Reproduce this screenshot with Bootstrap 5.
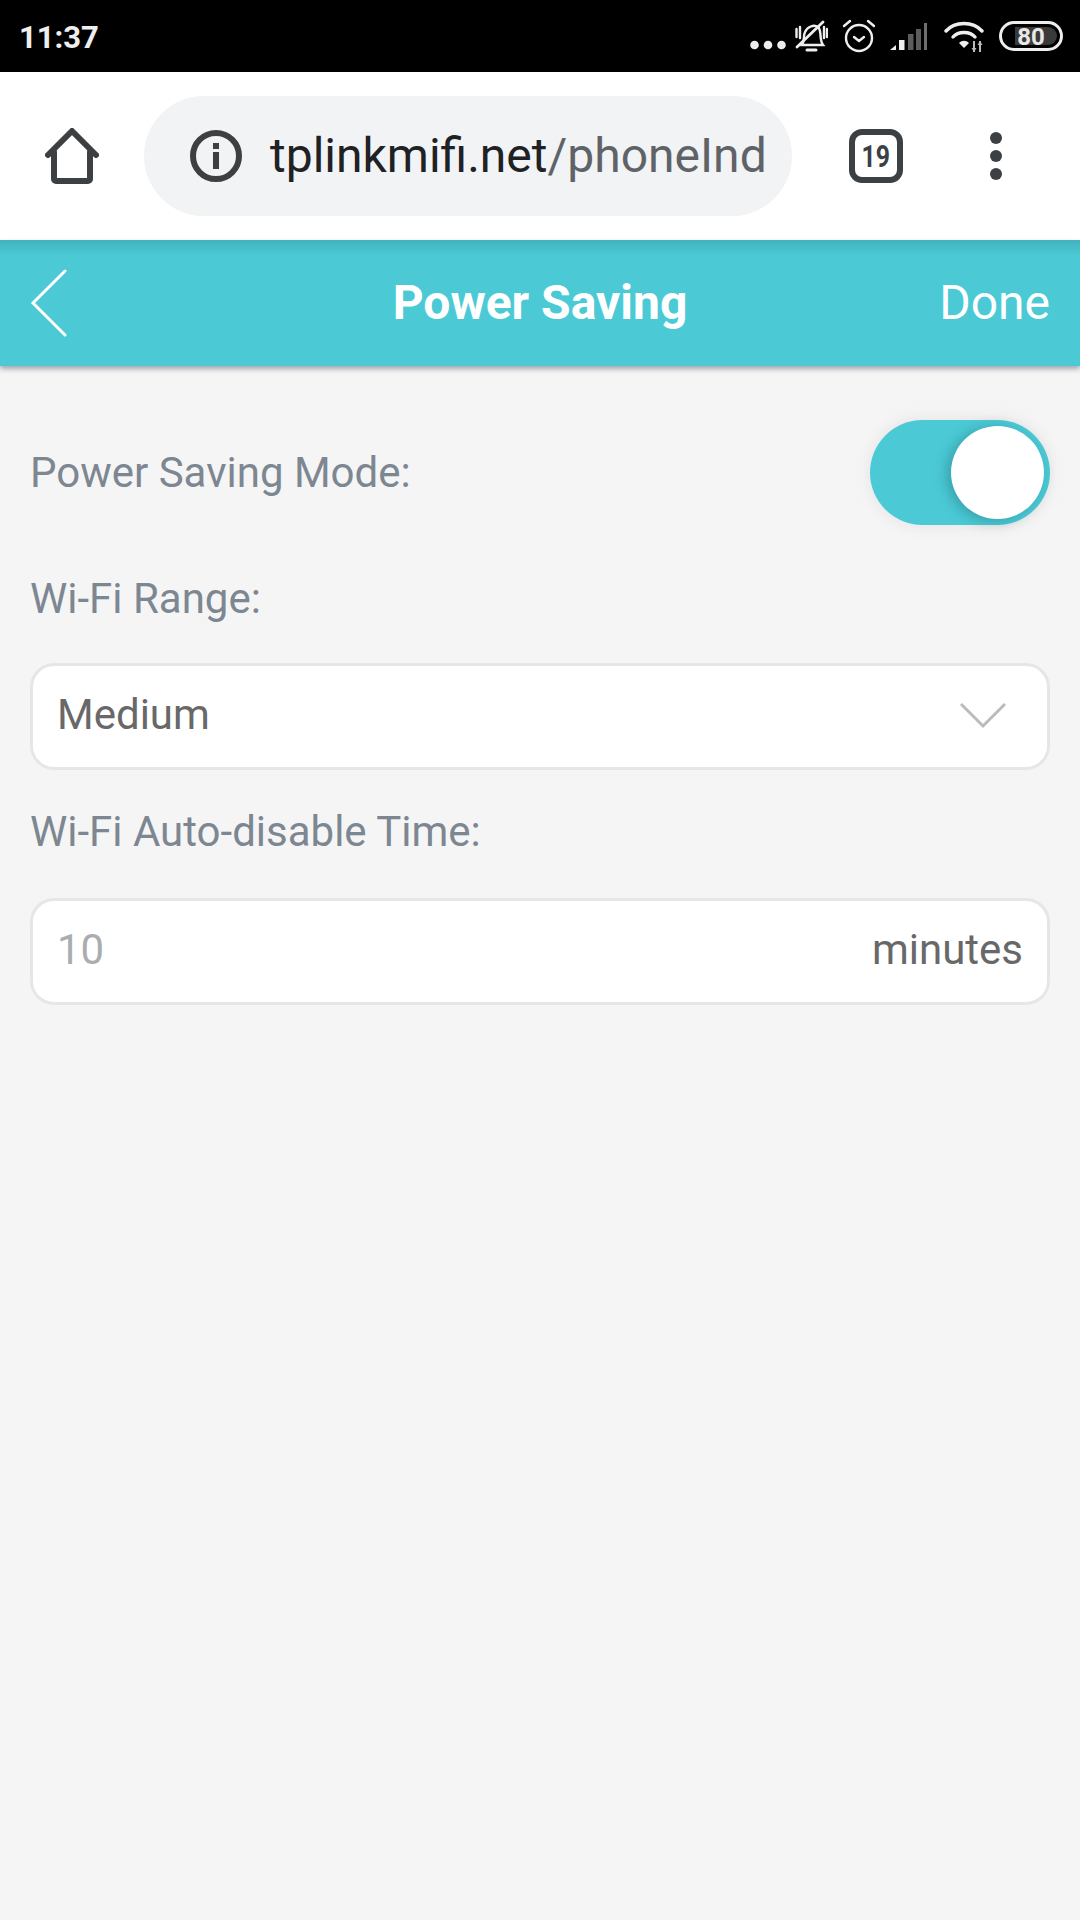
<!DOCTYPE html>
<html lang="en">
<head>
  <meta charset="UTF-8">
  <title>Power Saving</title>
  <link href="https://cdn.jsdelivr.net/npm/bootstrap@5.3.0/dist/css/bootstrap.min.css" rel="stylesheet">
  <style>
    html, body { height: 100%; }
    body { font-family: Roboto, "Liberation Sans", sans-serif; background: #f5f5f5; width: 1080px; min-height: 1920px; }
    svg { display: block; flex: none; }

    .status-strip { height: 72px; background: #000; color: #eee; padding: 0 17px 0 19px; }
    .status-time { font-size: 31px; font-weight: 700; line-height: 1; margin-top: 2px; }
    .status-dots { margin-top: 18px; }
    .status-bell { margin-left: 9px; }
    .status-alarm, .status-signal { margin-left: 14px; }
    .status-wifi { margin-left: 17px; }
    .status-battery { margin-left: 15px; }

    .browser-strip { height: 168px; background: #fff; padding-left: 45px; }
    .url-pill { width: 648px; height: 120px; margin-left: 45px; background: #f1f3f4; border-radius: 60px; padding: 0 0 0 46px; }
    .url-text { font-size: 48px; line-height: 1; color: #5f6368; white-space: nowrap; margin-left: 28px; }
    .url-text b { font-weight: 400; color: #202124; }
    .tab-count { width: 54px; height: 54px; margin-left: 57px; border: 6px solid #3c4043; border-radius: 13px; color: #3c4043; font-size: 31px; font-weight: 700; line-height: 1; }
    .tab-digits { display: block; transform: scaleX(.8); }
    .menu-dots { margin-left: 87px; }

    .title-bar { height: 126px; background: #4bcad6; color: #fff; padding: 0 30px; position: relative; box-shadow: 0 3px 5px rgba(60, 70, 90, .45); }
    .title-bar::before { content: ""; position: absolute; left: 0; right: 0; top: 0; height: 16px; background: linear-gradient(rgba(0, 0, 0, .12), rgba(0, 0, 0, 0)); }
    .title-side { flex: 1 1 0; }
    .title-text { font-size: 48px; font-weight: 700; line-height: 1; }
    .done-text { font-size: 48px; line-height: 1; }

    .settings-body { padding: 54px 30px 0; }
    .field-label { font-size: 42px; line-height: 1; color: #7d8792; }
    .label-range { margin: 53px 0 43px; }
    .label-time { margin: 41px 0 45px; }
    .switch-track { width: 180px; height: 105px; background: #4bcad6; border-radius: 53px; padding: 6px; box-shadow: 0 0 18px rgba(0, 0, 0, .08); }
    .switch-knob { width: 93px; height: 93px; background: #fff; border-radius: 50%; box-shadow: -4px 2px 14px rgba(0, 60, 70, .3); }
    .field-box.form-control { height: 107px; background: #fff; border: 3px solid #e6e6e6; border-radius: 24px; padding: 0 24px 3px; font-size: 42px; line-height: 1; color: #686868; }
    .field-hint { color: #aaadb0; }
    .field-chevron { margin-right: 16px; }
  </style>
</head>
<body class="d-flex flex-column">
  <div class="status-strip d-flex align-items-center justify-content-between">
    <span class="status-time">11:37</span>
    <div class="d-flex align-items-center">
      <svg class="status-dots" width="36" height="10" viewBox="0 0 36 10"><g fill="#eee"><circle cx="4.500" cy="5" r="4.300"/><circle cx="18" cy="5" r="4.300"/><circle cx="31.500" cy="5" r="4.300"/></g></svg>
      <svg class="status-bell" width="33" height="32" viewBox="0 0 33 32"><g fill="none" stroke="#eee" stroke-width="2.400" stroke-linecap="round"><path d="M7 25c3-4 1-9 3-13 2-5 9-8 13-5 4 3 1 13 5 18z"/><path d="M2 27 28 2" stroke-width="2.800"/><path d="M1.500 9v8M5 7v11M29 7v11M32 9v8"/><path d="M12 30h9" stroke-width="3"/></g></svg>
      <svg class="status-alarm" width="34" height="34" viewBox="0 0 34 34"><g fill="none" stroke="#eee" stroke-width="2.400" stroke-linecap="round" stroke-linejoin="round"><circle cx="17" cy="19" r="13"/><path d="M12 18l5 4 5-4"/><path d="M2 7l6-5M32 7l-6-5"/></g></svg>
      <svg class="status-signal" width="37" height="27" viewBox="0 0 37 27"><path d="M0 27 6 22V27z" fill="#eee"/><rect x="9" y="17" width="5.500" height="10" fill="#eee"/><rect x="18" y="11" width="5.500" height="16" fill="#5c5c5c"/><rect x="26" y="6" width="5" height="21" fill="#5c5c5c"/><rect x="34" y="0" width="3" height="27" fill="#6e6e6e"/></svg>
      <svg class="status-wifi" width="40" height="31" viewBox="0 0 40 31"><g fill="none" stroke="#eee" stroke-width="3.400" stroke-linecap="round"><path d="M2 10C11 0 29 0 38 10"/><path d="M9 16C14 10 26 10 31 16"/></g><path d="M15 22c3-3 7-3 10 0l-5 5z" fill="#eee"/><path d="M30 20v11M36 20v11" stroke="#bbb" stroke-width="2"/><path d="M27.500 27 30 31l2.500-4zM33.500 24 36 20l2.500 4z" fill="#bbb"/></svg>
      <svg class="status-battery" width="64" height="30" viewBox="0 0 64 30"><rect x="1.500" y="1.500" width="61" height="27" rx="13.500" fill="none" stroke="#eee" stroke-width="3"/><path d="M16 6h33a9 9 0 0 1 0 18H16z" fill="#3a3a3a"/><text x="32" y="24" text-anchor="middle" font-family="Roboto, sans-serif" font-size="24" font-weight="700" fill="#e8e8e8">80</text></svg>
    </div>
  </div>

  <div class="browser-strip d-flex align-items-center">
    <svg width="54" height="56" viewBox="0 0 54 56"><path d="M3 27 27 3l24 24M9 24v27a2 2 0 0 0 2 2h32a2 2 0 0 0 2-2V24" fill="none" stroke="#3c4043" stroke-width="6" stroke-linecap="round" stroke-linejoin="round"/></svg>
    <div class="url-pill d-flex align-items-center">
      <svg width="52" height="52" viewBox="0 0 52 52"><circle cx="26" cy="26" r="23" fill="none" stroke="#3c4043" stroke-width="6"/><rect x="23" y="13" width="6" height="6" fill="#3c4043"/><rect x="23" y="22" width="6" height="17" fill="#3c4043"/></svg>
      <div class="url-text"><b>tplinkmifi.net</b>/phoneInd</div>
    </div>
    <div class="tab-count d-flex align-items-center justify-content-center"><span class="tab-digits">19</span></div>
    <svg class="menu-dots" width="12" height="48" viewBox="0 0 12 48"><g fill="#3c4043"><circle cx="6" cy="6" r="6"/><circle cx="6" cy="24" r="6"/><circle cx="6" cy="42" r="6"/></g></svg>
  </div>

  <div class="title-bar d-flex align-items-center">
    <div class="title-side">
      <svg width="38" height="68" viewBox="0 0 38 68"><path d="M35 2 3 34l32 32" fill="none" stroke="#fff" stroke-width="3" stroke-linecap="round"/></svg>
    </div>
    <span class="title-text">Power Saving</span>
    <div class="title-side text-end"><span class="done-text">Done</span></div>
  </div>

  <div class="settings-body">
    <div class="d-flex align-items-center justify-content-between">
      <span class="field-label">Power Saving Mode:</span>
      <div class="switch-track d-flex justify-content-end"><div class="switch-knob"></div></div>
    </div>
    <div class="field-label label-range">Wi-Fi Range:</div>
    <div class="field-box form-control d-flex align-items-center justify-content-between">
      <span>Medium</span>
      <svg class="field-chevron" width="48" height="28" viewBox="0 0 48 28"><path d="M2 3l22 22L46 3" fill="none" stroke="#b9bcbf" stroke-width="3"/></svg>
    </div>
    <div class="field-label label-time">Wi-Fi Auto-disable Time:</div>
    <div class="field-box form-control d-flex align-items-center justify-content-between">
      <span class="field-hint">10</span>
      <span>minutes</span>
    </div>
  </div>

  <script src="https://cdn.jsdelivr.net/npm/bootstrap@5.3.0/dist/js/bootstrap.bundle.min.js"></script>
</body>
</html>
